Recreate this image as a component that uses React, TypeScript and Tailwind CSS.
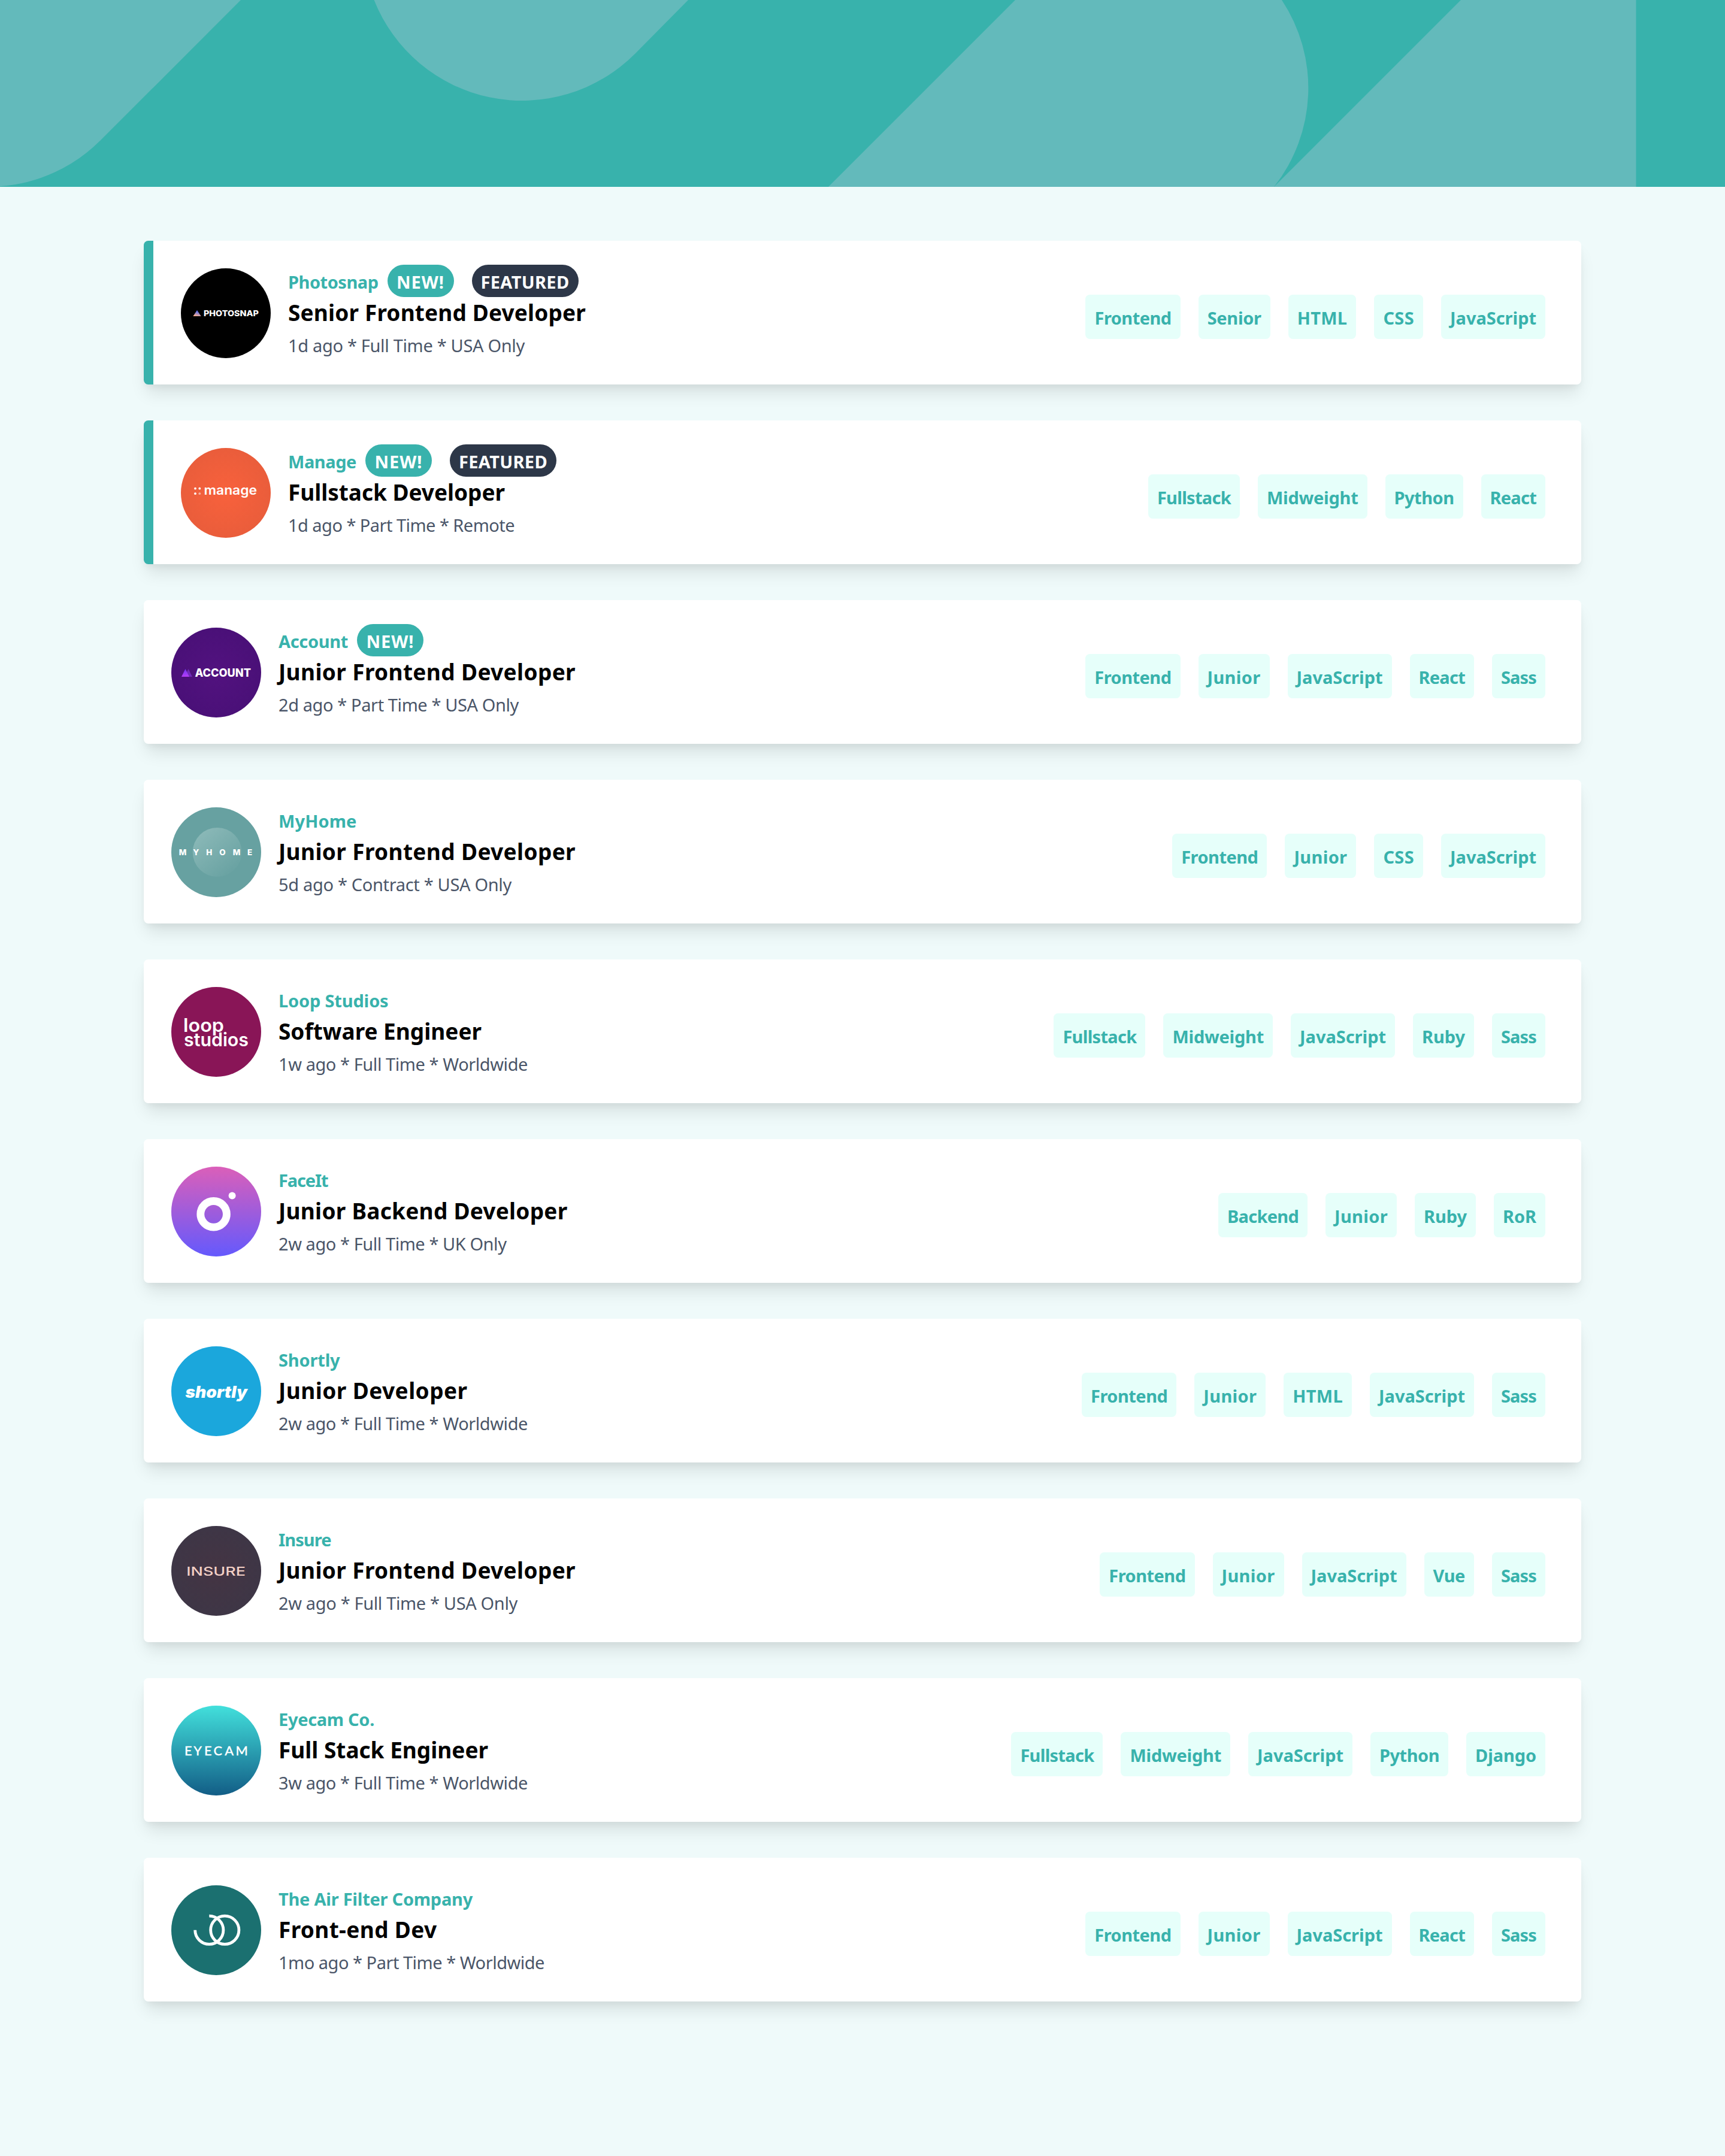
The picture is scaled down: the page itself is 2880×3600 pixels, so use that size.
import { useLayoutEffect, useRef, type ReactNode } from "react";

/** Single line of text whose tracking is adjusted so that it spans `width` pixels. */
function FitText({ children, width }: { children: string; width: number }) {
  const ref = useRef<HTMLSpanElement>(null);
  useLayoutEffect(() => {
    const el = ref.current;
    if (!el) return;
    el.style.letterSpacing = "0px";
    const natural = el.getBoundingClientRect().width;
    el.style.letterSpacing = `${(width - natural) / children.length}px`;
  }, [children, width]);
  return (
    <span ref={ref} className="inline-block whitespace-nowrap">
      {children}
    </span>
  );
}

function Disc({ children, fill }: { children: ReactNode; fill: string }) {
  return (
    <svg viewBox="0 0 150 150" className="size-[150px] shrink-0">
      <circle cx="75" cy="75" r="75" fill={fill} />
      {children}
    </svg>
  );
}

const logos: Record<string, ReactNode> = {
  Photosnap: (
    <Disc fill="#000">
      <defs>
        <linearGradient id="ps" x1="0.6" y1="0" x2="0.3" y2="1">
          <stop offset="0.2" stopColor="#5a6ff0" />
          <stop offset="1" stopColor="#ffb08a" />
        </linearGradient>
      </defs>
      <path d="M20.4 80 L27 70 L33.7 80 Z" fill="url(#ps)" />
      <text x="38" y="80" fontFamily="Inter" fontWeight="800" fontSize="13.6" fill="#fff" textLength="92" lengthAdjust="spacingAndGlyphs">PHOTOSNAP</text>
    </Disc>
  ),
  Manage: (
    <Disc fill="url(#mg)">
      <defs>
        <radialGradient id="mg">
          <stop offset="0" stopColor="#f8613c" />
          <stop offset="1" stopColor="#ea5d3b" />
        </radialGradient>
      </defs>
      <circle cx="24" cy="67.7" r="1.9" fill="#fff" />
      <circle cx="31.3" cy="67.7" r="1.9" fill="#fff" />
      <circle cx="24" cy="76.2" r="1.9" fill="#fff" />
      <circle cx="31.3" cy="76.2" r="1.9" fill="#fff" opacity="0.5" />
      <text x="38.5" y="78" fontFamily="Inter" fontWeight="600" fontSize="21.4" fill="#fff" textLength="88.5" lengthAdjust="spacingAndGlyphs">manage</text>
    </Disc>
  ),
  Account: (
    <Disc fill="url(#ac)">
      <defs>
        <radialGradient id="ac">
          <stop offset="0" stopColor="#52127f" />
          <stop offset="1" stopColor="#4a1078" />
        </radialGradient>
        <linearGradient id="acm" x1="0" y1="0" x2="0" y2="1">
          <stop offset="0" stopColor="#6f35f0" />
          <stop offset="1" stopColor="#b63cf7" />
        </linearGradient>
      </defs>
      <path d="M22 82 L28.5 69 L35 82 Z" fill="#7029b8" />
      <path d="M17 82 L23.5 69 L30 82 Z" fill="url(#acm)" />
      <text x="39.4" y="82" fontFamily="Inter" fontWeight="800" fontSize="18.4" fill="#fff" textLength="93.6" lengthAdjust="spacingAndGlyphs">ACCOUNT</text>
    </Disc>
  ),
  MyHome: (
    <Disc fill="#67a1a1">
      <defs>
        <linearGradient id="mh" x1="0.15" y1="0.1" x2="0.85" y2="0.95">
          <stop offset="0" stopColor="#8ab8b7" />
          <stop offset="1" stopColor="#67a1a1" />
        </linearGradient>
      </defs>
      <circle cx="76.7" cy="75" r="41" fill="url(#mh)" />
      <text x="19.1 41.4 63.2 85.5 109.1 131.2" y="79.8" textAnchor="middle" fontFamily="Inter" fontWeight="800" fontSize="13.4" fill="#fff">MYHOME</text>
    </Disc>
  ),
  "Loop Studios": (
    <Disc fill="#891557">
      <text x="20" y="74.5" fontFamily="Inter" fontWeight="600" fontSize="31" fill="#fff" textLength="68" lengthAdjust="spacingAndGlyphs">loop</text>
      <text x="21" y="98.5" fontFamily="Inter" fontWeight="600" fontSize="31" fill="#fff" textLength="108" lengthAdjust="spacingAndGlyphs">studios</text>
    </Disc>
  ),
  FaceIt: (
    <Disc fill="url(#fi)">
      <defs>
        <linearGradient id="fi" x1="0" y1="0" x2="0" y2="1">
          <stop offset="0" stopColor="#db5fb9" />
          <stop offset="1" stopColor="#6459fd" />
        </linearGradient>
      </defs>
      <circle cx="70.6" cy="79.3" r="21.8" fill="none" stroke="#fff" strokeWidth="12.8" />
      <circle cx="101.6" cy="48.5" r="6" fill="#fff" />
    </Disc>
  ),
  Shortly: (
    <Disc fill="#1ba7dc">
      <text x="23.5" y="86.3" fontFamily="Inter" fontWeight="900" fontStyle="italic" fontSize="26.5" fill="#fff" textLength="103.5" lengthAdjust="spacingAndGlyphs">shortly</text>
    </Disc>
  ),
  Insure: (
    <Disc fill="url(#is)">
      <defs>
        <radialGradient id="is">
          <stop offset="0" stopColor="#443443" />
          <stop offset="1" stopColor="#3e3646" />
        </radialGradient>
      </defs>
      <text x="25.2" y="83" fontFamily="Inter" fontWeight="500" fontSize="20.2" fill="#f3d0c6" textLength="98.8" lengthAdjust="spacingAndGlyphs">INSURE</text>
    </Disc>
  ),
  "Eyecam Co.": (
    <Disc fill="url(#ey)">
      <defs>
        <linearGradient id="ey" x1="0" y1="0" x2="0" y2="1">
          <stop offset="0" stopColor="#42e0dc" />
          <stop offset="1" stopColor="#125d86" />
        </linearGradient>
      </defs>
      <text x="28.2 44 61.2 77.8 96.6 117.6" y="82.7" textAnchor="middle" fontFamily="Lato" fontWeight="500" fontSize="21.8" fill="#fff" stroke="#fff" strokeWidth="0.3">EYECAM</text>
    </Disc>
  ),
  "The Air Filter Company": (
    <Disc fill="#1b7070">
      <g fill="none" stroke="#fff" strokeWidth="4.8">
        <circle cx="89.3" cy="74.8" r="23.6" />
        <path d="M39.7 74.8 A23.6 23.6 0 1 0 63.3 51.2" />
      </g>
    </Disc>
  ),
};

const tagWidths: Record<string, number> = {
  Frontend: 128.2,
  Senior: 90,
  HTML: 83.7,
  CSS: 51.6,
  JavaScript: 144,
  Fullstack: 123,
  Midweight: 152.6,
  Python: 100,
  React: 77.5,
  Junior: 89,
  Sass: 59,
  Ruby: 72,
  Backend: 119,
  RoR: 56,
  Vue: 53.5,
  Django: 102,
};

type Job = {
  company: [string, number];
  title: [string, number];
  meta: [string, number];
  isNew?: boolean;
  featured?: boolean;
  tags: string[];
};

const jobs: Job[] = [
  { company: ["Photosnap", 150.5], title: ["Senior Frontend Developer", 497], meta: ["1d ago * Full Time * USA Only", 395], isNew: true, featured: true, tags: ["Frontend", "Senior", "HTML", "CSS", "JavaScript"] },
  { company: ["Manage", 114], title: ["Fullstack Developer", 362], meta: ["1d ago * Part Time * Remote", 378], isNew: true, featured: true, tags: ["Fullstack", "Midweight", "Python", "React"] },
  { company: ["Account", 116], title: ["Junior Frontend Developer", 496], meta: ["2d ago * Part Time * USA Only", 401], isNew: true, tags: ["Frontend", "Junior", "JavaScript", "React", "Sass"] },
  { company: ["MyHome", 130.5], title: ["Junior Frontend Developer", 496], meta: ["5d ago * Contract * USA Only", 389], tags: ["Frontend", "Junior", "CSS", "JavaScript"] },
  { company: ["Loop Studios", 183.5], title: ["Software Engineer", 339], meta: ["1w ago * Full Time * Worldwide", 416], tags: ["Fullstack", "Midweight", "JavaScript", "Ruby", "Sass"] },
  { company: ["FaceIt", 82.5], title: ["Junior Backend Developer", 482.5], meta: ["2w ago * Full Time * UK Only", 380.5], tags: ["Backend", "Junior", "Ruby", "RoR"] },
  { company: ["Shortly", 102.5], title: ["Junior Developer", 315.5], meta: ["2w ago * Full Time * Worldwide", 416], tags: ["Frontend", "Junior", "HTML", "JavaScript", "Sass"] },
  { company: ["Insure", 87.5], title: ["Junior Frontend Developer", 496], meta: ["2w ago * Full Time * USA Only", 399], tags: ["Frontend", "Junior", "JavaScript", "Vue", "Sass"] },
  { company: ["Eyecam Co.", 160], title: ["Full Stack Engineer", 350], meta: ["3w ago * Full Time * Worldwide", 416], tags: ["Fullstack", "Midweight", "JavaScript", "Python", "Django"] },
  { company: ["The Air Filter Company", 324], title: ["Front-end Dev", 264.5], meta: ["1mo ago * Part Time * Worldwide", 444], tags: ["Frontend", "Junior", "JavaScript", "React", "Sass"] },
];

function JobCard({ job }: { job: Job }) {
  return (
    <article
      className={
        "flex h-[240px] items-start rounded-[7.5px] bg-white pr-[60px] shadow-[0_18.75px_28px_-5.6px_rgba(0,0,0,0.1),0_7.5px_11.25px_-3.75px_rgba(0,0,0,0.05)]" +
        (job.featured ? " border-l-[16px] border-[#38b2ac]" : "")
      }
    >
      <div className="pt-[46px] pl-[46px]">{logos[job.company[0]]}</div>
      <div className="ml-[29px] flex flex-col pt-10">
        <div className="flex h-[54px] text-[29px] leading-[57px] font-bold text-[#38b2ac]">
          <FitText width={job.company[1]}>{job.company[0]}</FitText>
          {job.isNew && (
            <span className="ml-[15px] h-[54px] w-[111px] rounded-full bg-[#38b2ac] pl-[15.5px] text-white">
              <FitText width={80}>NEW!</FitText>
            </span>
          )}
          {job.featured && (
            <span className="ml-[30px] h-[54px] w-[178px] rounded-full bg-[#2d3748] pl-[15px] text-white">
              <FitText width={148}>FEATURED</FitText>
            </span>
          )}
        </div>
        <h2 className="mt-[3px] h-[45px] text-[37px] leading-[45px] font-bold text-black">
          <FitText width={job.title[1]}>{job.title[0]}</FitText>
        </h2>
        <p className="mt-[10px] h-[45px] text-[29px] leading-[45px] text-[#4a5568]">
          <FitText width={job.meta[1]}>{job.meta[0]}</FitText>
        </p>
      </div>
      <div className="ml-auto flex gap-[30px] pt-[90px]">
        {job.tags.map((tag) => (
          <span key={tag} className="h-[74px] rounded-[7.5px] bg-[#e6fffa] px-[15px] text-[29px] leading-[77px] font-bold text-[#38b2ac]">
            <FitText width={tagWidths[tag]}>{tag}</FitText>
          </span>
        ))}
      </div>
    </article>
  );
}

export default function App() {
  return (
    <div className="min-h-[3600px] w-[2880px] bg-[#effafa] font-['Noto_Sans',sans-serif]">
      <header className="h-[312px] overflow-hidden bg-[#38b2ac]">
        <svg viewBox="0 0 2880 312" className="block h-[312px] w-[2880px]" fill="#63babb">
          <path d="M0 0 H402 L168.1 234.1 A266 266 0 0 1 0 311.3 Z" />
          <path d="M624.5 0 A266 266 0 0 0 1060 90 L1149 0 Z" />
          <path d="M1695 0 H2140 A266 266 0 0 1 2127 312 H1383 Z" />
          <path d="M2439 0 H2731.5 V312 H2127 Z" />
        </svg>
      </header>
      <main className="flex flex-col gap-[60px] px-[240px] pt-[90px]">
        {jobs.map((job) => (
          <JobCard key={job.company[0]} job={job} />
        ))}
      </main>
    </div>
  );
}
